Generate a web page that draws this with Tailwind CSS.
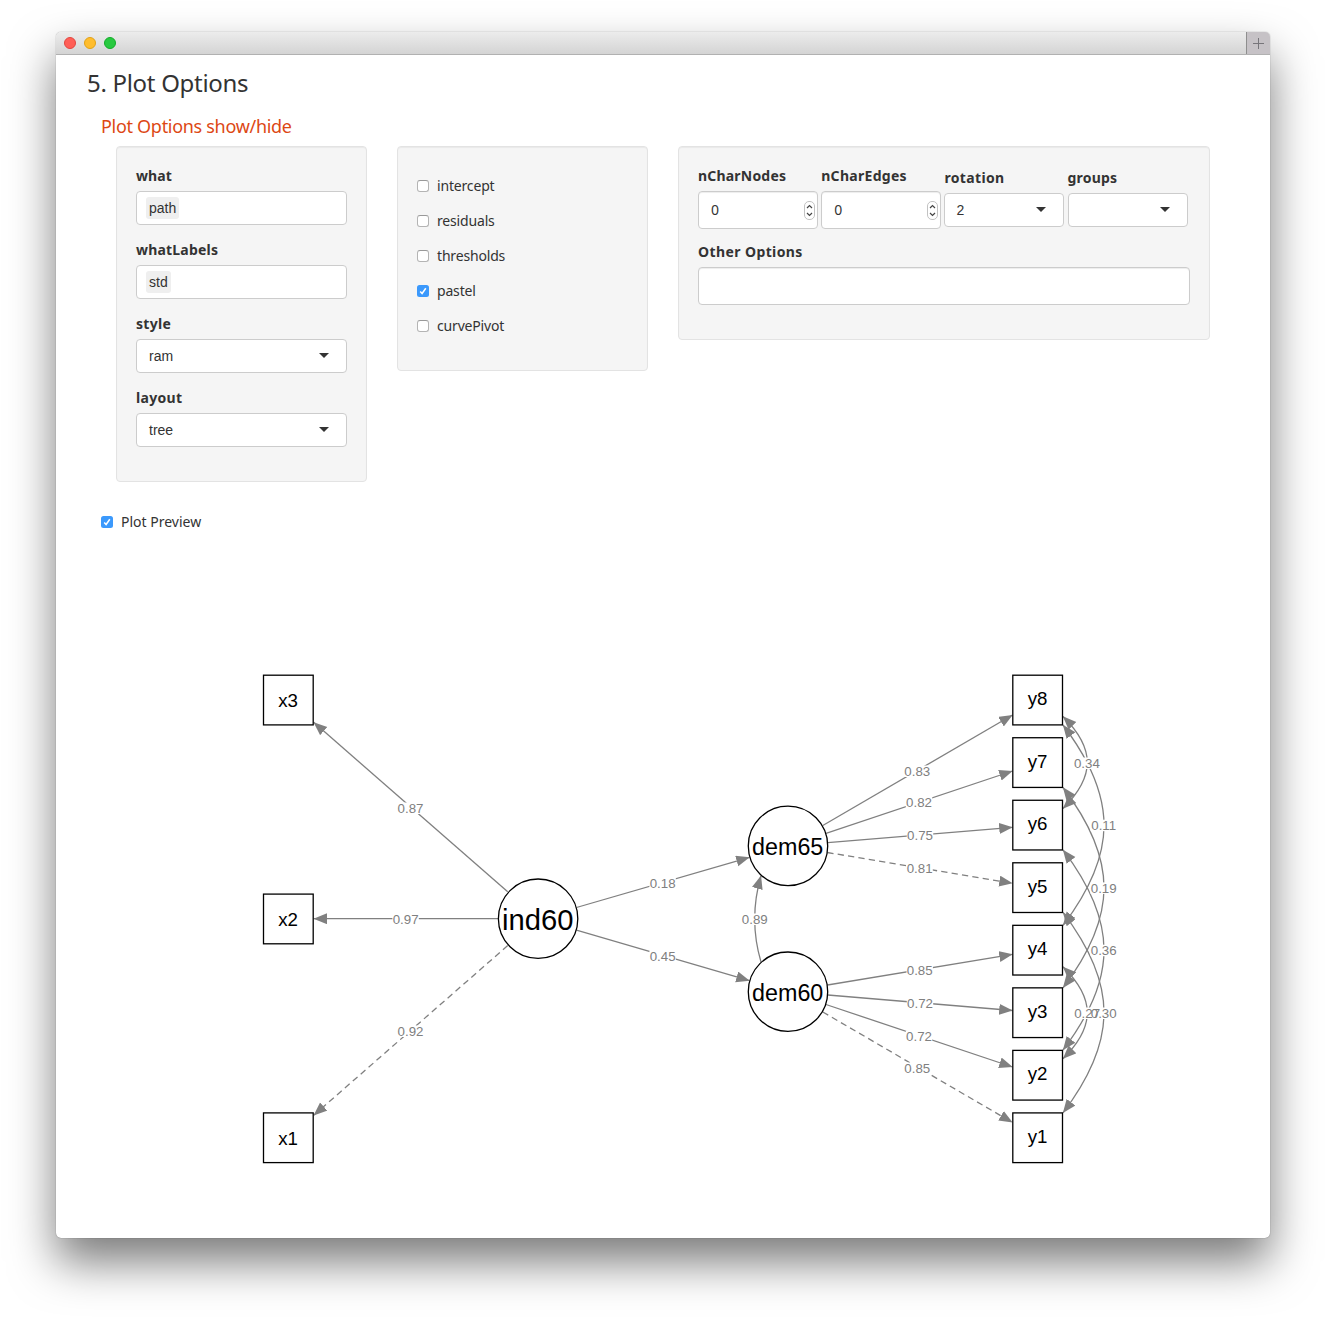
<!DOCTYPE html>
<html lang="en">
<head>
<meta charset="utf-8">
<title>Plot Options</title>
<script src="https://cdn.jsdelivr.net/npm/@tailwindcss/browser@4"></script>
</head>
<body class="bg-white font-['Noto_Sans',sans-serif] text-[#333]">
<div class="h-[1318px] overflow-hidden px-14 pt-8">
<main class="flex h-[1206px] w-[1214px] flex-col overflow-hidden rounded-[5px] bg-white shadow-[0_0_1px_rgba(0,0,0,0.55),0_24px_46px_rgba(0,0,0,0.52)]">
  <header class="flex h-[23px] shrink-0 border-b border-[#b1b1b1] bg-linear-to-b from-[#ececec] to-[#d4d4d4]">
    <div class="flex flex-1 items-center gap-2 pl-2">
      <span class="size-3 rounded-full border border-[#e2463f] bg-[#ff5f57]"></span>
      <span class="size-3 rounded-full border border-[#e1a116] bg-[#ffbd2e]"></span>
      <span class="size-3 rounded-full border border-[#12ac28] bg-[#28c940]"></span>
    </div>
    <div class="flex w-6 items-center justify-center border-l border-[#8e8e8e] bg-[#c6c2c6]">
      <svg class="size-[11px]" viewBox="0 0 11 11" stroke="#77757a" stroke-width="1"><path d="M5.5 0v11M0 5.5h11"/></svg>
    </div>
  </header>

  <div class="shrink-0 pl-[31px] pt-3">
    <h2 class="h-8 whitespace-nowrap text-2xl leading-8 tracking-[-0.3px]">5. Plot Options</h2>
    <h4 class="mt-[17px] h-5 whitespace-nowrap pl-3.5 text-[18px] leading-5 tracking-[-0.3px] text-[#dd4814]">Plot Options show/hide</h4>
  </div>

  <div class="ml-[60px] mt-2.5 flex shrink-0 items-start gap-[30px] text-[14px] leading-5">
    <section class="flex h-[336px] w-[251px] flex-col gap-[15px] rounded border border-[#e3e3e3] bg-[#f5f5f5] p-[19px] shadow-[inset_0_1px_1px_rgba(0,0,0,0.05)]">
      <div><label class="mb-[5px] block font-bold tracking-[0.1px]">what</label>
        <div class="flex h-[34px] items-center rounded border border-[#ccc] bg-white pl-[9px] font-['Liberation_Sans',sans-serif]"><span class="rounded-[3px] bg-[#efefef] px-[3px] py-px">path</span></div></div>
      <div><label class="mb-[5px] block font-bold tracking-[0.2px]">whatLabels</label>
        <div class="flex h-[34px] items-center rounded border border-[#ccc] bg-white pl-[9px] font-['Liberation_Sans',sans-serif]"><span class="rounded-[3px] bg-[#efefef] px-[3px] py-px">std</span></div></div>
      <div><label class="mb-[5px] block font-bold tracking-[0.3px]">style</label>
        <div class="flex h-[34px] items-center justify-between rounded border border-[#ccc] bg-white pl-3 pr-[17px] font-['Liberation_Sans',sans-serif]">ram<svg class="mb-px h-[5px] w-2.5" viewBox="0 0 10 5" fill="#333"><path d="M0 0h10L5 5z"/></svg></div></div>
      <div><label class="mb-[5px] block font-bold tracking-[0.3px]">layout</label>
        <div class="flex h-[34px] items-center justify-between rounded border border-[#ccc] bg-white pl-3 pr-[17px] font-['Liberation_Sans',sans-serif]">tree<svg class="mb-px h-[5px] w-2.5" viewBox="0 0 10 5" fill="#333"><path d="M0 0h10L5 5z"/></svg></div></div>
    </section>

    <section class="flex h-[225px] w-[251px] flex-col gap-[15px] rounded border border-[#e3e3e3] bg-[#f5f5f5] px-[19px] pt-[29px] tracking-[-0.17px] shadow-[inset_0_1px_1px_rgba(0,0,0,0.05)]">
      <label class="flex items-center gap-2"><i class="size-3 rounded-[3px] border border-[#b4b4b4] border-t-[#999] bg-white"></i>intercept</label>
      <label class="flex items-center gap-2"><i class="size-3 rounded-[3px] border border-[#b4b4b4] border-t-[#999] bg-white"></i>residuals</label>
      <label class="flex items-center gap-2"><i class="size-3 rounded-[3px] border border-[#b4b4b4] border-t-[#999] bg-white"></i>thresholds</label>
      <label class="flex items-center gap-2"><svg class="size-3" viewBox="0 0 12 12"><rect width="12" height="12" rx="2.5" fill="#3b99fc"/><path d="M3.2 6.4l1.9 2.1 3.7-5.3" fill="none" stroke="#fff" stroke-width="1.5"/></svg>pastel</label>
      <label class="flex items-center gap-2"><i class="size-3 rounded-[3px] border border-[#b4b4b4] border-t-[#999] bg-white"></i>curvePivot</label>
    </section>

    <section class="h-[194px] w-[532px] rounded border border-[#e3e3e3] bg-[#f5f5f5] px-[19px] pt-[19px] shadow-[inset_0_1px_1px_rgba(0,0,0,0.05)]">
      <div class="flex h-[76px] gap-[3.2px]">
        <div class="w-[120px]"><label class="mb-[5px] block font-bold tracking-[0.2px]">nCharNodes</label>
          <div class="flex h-[38px] items-center justify-between rounded border border-[#ccc] bg-white pl-3 pr-0.5 shadow-[inset_0_1px_1px_rgba(0,0,0,0.075)]">0<svg class="h-[19px] w-[11px]" viewBox="0 0 11 19" fill="none"><rect x=".5" y=".5" width="10" height="18" rx="4.5" fill="#fff" stroke="#c2c2c2"/><path d="M3 7l2.5-2.5L8 7M3 12l2.5 2.5L8 12" stroke="#444" stroke-width="1.2"/></svg></div></div>
        <div class="w-[120px]"><label class="mb-[5px] block font-bold tracking-[0.3px]">nCharEdges</label>
          <div class="flex h-[38px] items-center justify-between rounded border border-[#ccc] bg-white pl-3 pr-0.5 shadow-[inset_0_1px_1px_rgba(0,0,0,0.075)]">0<svg class="h-[19px] w-[11px]" viewBox="0 0 11 19" fill="none"><rect x=".5" y=".5" width="10" height="18" rx="4.5" fill="#fff" stroke="#c2c2c2"/><path d="M3 7l2.5-2.5L8 7M3 12l2.5 2.5L8 12" stroke="#444" stroke-width="1.2"/></svg></div></div>
        <div class="w-[120px] pt-0.5"><label class="mb-[5px] block font-bold tracking-[0.35px]">rotation</label>
          <div class="flex h-[34px] items-center justify-between rounded border border-[#ccc] bg-white pl-[11px] pr-[17px] font-['Liberation_Sans',sans-serif]">2<svg class="mb-px h-[5px] w-2.5" viewBox="0 0 10 5" fill="#333"><path d="M0 0h10L5 5z"/></svg></div></div>
        <div class="w-[120px] pt-0.5"><label class="mb-[5px] block font-bold tracking-[0.2px]">groups</label>
          <div class="flex h-[34px] items-center justify-end rounded border border-[#ccc] bg-white pr-[17px]"><svg class="mb-px h-[5px] w-2.5" viewBox="0 0 10 5" fill="#333"><path d="M0 0h10L5 5z"/></svg></div></div>
      </div>
      <label class="mb-[5px] block font-bold tracking-[0.4px]">Other Options</label>
      <div class="h-[38px] w-[492px] rounded border border-[#ccc] bg-white shadow-[inset_0_1px_1px_rgba(0,0,0,0.075)]"></div>
    </section>
  </div>

  <label class="ml-[45px] mt-[30px] flex h-5 shrink-0 items-center gap-2 text-[14px] leading-5"><svg class="size-3" viewBox="0 0 12 12"><rect width="12" height="12" rx="2.5" fill="#3b99fc"/><path d="M3.2 6.4l1.9 2.1 3.7-5.3" fill="none" stroke="#fff" stroke-width="1.5"/></svg>Plot Preview</label>

  <svg class="mt-2 h-[698px] w-[1214px] shrink-0 font-['Liberation_Sans',sans-serif]" viewBox="56 540 1214 698">
    <defs>
      <marker id="arrow" markerUnits="userSpaceOnUse" markerWidth="14" markerHeight="12" refX="13.3" refY="5.5" orient="auto-start-reverse"><path d="M0 0L13.5 5.5L0 11z" fill="#808080"/></marker>
    </defs>
    <g fill="none" stroke="#808080" stroke-width="1.3" id="edges"></g>
    <g id="gaps" fill="#fff"></g>
    <g id="labels" fill="#808080" font-size="13.3" text-anchor="middle"></g>
    <g id="nodes" fill="#fff" stroke="#000" stroke-width="1.3"></g>
    <g id="names" fill="#000" text-anchor="middle"></g>
  </svg>
</main>
</div>
<script>
const NS = 'http://www.w3.org/2000/svg';
function add(group, tag, attrs, text) {
  const el = document.createElementNS(NS, tag);
  for (const k in attrs) el.setAttribute(k, attrs[k]);
  if (text) el.textContent = text;
  document.getElementById(group).appendChild(el);
}
// Directed paths: [path, dashed]
[
  ['M507.7 891.8L313.7 722.3'], ['M498.5 918.7H313.7'], ['M507.7 945.6L313.7 1115.3', 1],
  ['M576.5 907.5L749.5 857.3'], ['M576.5 930.2L749.5 980.6'],
  ['M822.8 825.5L1012.5 715'], ['M826 833.3L1012.5 771'], ['M827.8 842.7L1012.5 827.3'], ['M827.3 852.5L1012.5 883.3', 1],
  ['M827.5 985L1012.5 954.3'], ['M827.8 995L1012.5 1010.5'], ['M826 1004.5L1012.5 1067'], ['M822.8 1012L1012.5 1122.5', 1],
  ['M761 962Q748.4 919 761 875.7']
].forEach(([d, dash]) => add('edges', 'path', dash ? {d, 'stroke-dasharray': '6.3 4.2', 'marker-end': 'url(#arrow)'} : {d, 'marker-end': 'url(#arrow)'}));
// Residual covariances: [y start, y end, control x, control dy]
[
  [716.5, 808.5, 1095.4, 32], [725, 925.3, 1117.7, 72], [787.5, 987.8, 1117.7, 72],
  [849.8, 1050, 1117.7, 72], [912.3, 1112.8, 1117.7, 72], [966.8, 1058.7, 1095.4, 32]
].forEach(([a, b, cx, dy]) => add('edges', 'path', {d: `M1063 ${a}C${cx} ${a + dy} ${cx} ${b - dy} 1063 ${b}`, 'marker-start': 'url(#arrow)', 'marker-end': 'url(#arrow)'}));
// Edge weights
[
  [410.5, 808.5, '0.87'], [405.6, 919.2, '0.97'], [410.5, 1031.5, '0.92'], [662.6, 883.5, '0.18'], [662.6, 956.5, '0.45'],
  [754.8, 919.5, '0.89'], [917.3, 771.5, '0.83'], [919, 802.5, '0.82'], [920, 835.5, '0.75'], [919.6, 868.5, '0.81'],
  [919.7, 970.5, '0.85'], [920, 1003.5, '0.72'], [919, 1036.5, '0.72'], [917.3, 1068.5, '0.85'],
  [1086.9, 763.5, '0.34'], [1103.7, 825.7, '0.11'], [1103.7, 888.4, '0.19'], [1103.7, 950.7, '0.36'], [1087.1, 1013.5, '0.27'], [1103.7, 1013.5, '0.30']
].forEach(([x, y, t]) => {
  add('gaps', 'rect', {x: x - 13.2, y: y - 6, width: 26.4, height: 11.5});
  add('labels', 'text', {x, y: y + 4.7}, t);
});
[['x3', 699.8], ['x2', 918.7], ['x1', 1137.5]].forEach(([t, y]) => {
  add('nodes', 'rect', {x: 263.5, y: y - 24.6, width: 49.7, height: 49.7});
  add('names', 'text', {x: 288, y: y + 7, 'font-size': 18.7}, t);
});
for (let i = 0; i < 8; i++) {
  const y = 699.8 + i * 62.53;
  add('nodes', 'rect', {x: 1012.8, y: y - 24.6, width: 49.7, height: 49.7});
  add('names', 'text', {x: 1037.6, y: y + 5.5, 'font-size': 18.7}, 'y' + (8 - i));
}
[['ind60', 537.8, 918.7, 29.2, 11.3], ['dem65', 787.7, 845.9, 23.3, 9], ['dem60', 787.7, 991.7, 23.3, 9.2]].forEach(([t, x, y, s, dy]) => {
  add('nodes', 'circle', {cx: x + 0.3, cy: y, r: 39.7});
  add('names', 'text', {x, y: y + dy, 'font-size': s}, t);
});
</script>
</body>
</html>
